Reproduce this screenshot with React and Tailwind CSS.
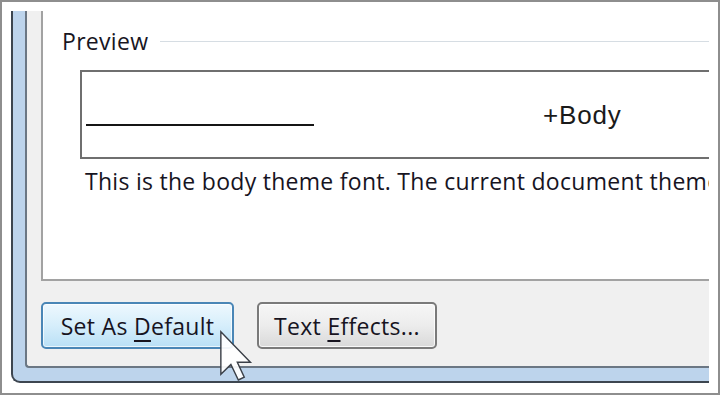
import React from "react";

const font = { fontFamily: '"Open Sans", "Noto Sans", sans-serif' };

export default function App() {
  return (
    <div
      className="relative w-[720px] h-[395px] bg-white border-2 border-[#8e8e8e] pl-[9px] pt-[9px] overflow-hidden"
      style={font}
    >
      <div className="w-[698px] h-[372px] overflow-hidden">
        <div className="w-[780px] h-full flex flex-col border-l-2 border-b-2 border-[#3d4650] rounded-bl-[9px] bg-[#bdd4ec] pl-[12px] pb-[13px]">
          <div className="flex-1 flex flex-col border-l-2 border-b-2 border-[#6b7784] rounded-bl-[4px] bg-[#f0f0f0] pl-[14px] pb-[17px]">
            <div className="flex-1 flex flex-col border-l-2 border-b-2 border-[#a2a2a2] bg-white pt-[15px] pl-[19px]">
              <div className="flex items-center h-[30px]">
                <span className="text-[23px] leading-[30px] tracking-[0.3px] text-[#18161f]">Preview</span>
                <div className="flex-1 h-px bg-[#d6dde3] ml-[12px]" />
              </div>
              <div className="ml-[18px] mt-[14px] w-[700px] h-[89px] border-2 border-[#6f6f6f] pl-[4px] pt-[31px] flex items-start">
                <div className="w-[228px] h-[2px] mt-[21px] bg-[#151515] shrink-0" />
                <span
                  className="ml-[229px] text-[26px] leading-[25px] tracking-[0.8px] text-[#1a1a1a]"
                  style={{ fontFamily: '"Liberation Sans", Arial, sans-serif' }}
                >
                  +Body
                </span>
              </div>
              <div className="ml-[23px] mt-[7px] text-[23px] leading-[30px] tracking-[0.28px] text-[#17141f] whitespace-nowrap">
                This is the body theme font. The current document theme defines which font will be used.
              </div>
            </div>
            <div className="flex gap-[23px] mt-[21px] h-[47px]">
              <div className="w-[193px] h-[47px] rounded-[5px] border-2 border-[#4a86b6] bg-gradient-to-b from-[#eef8fe] via-[#d6eefb] to-[#b9e0f6] shadow-[inset_0_0_0_1px_rgba(255,255,255,0.7)] flex items-center justify-center">
                <span className="text-[23px] leading-[30px] tracking-[0.3px] text-[#17141f]">
                  Set As{" "}
                  <span className="underline decoration-2 underline-offset-[5px]">D</span>
                  efault
                </span>
              </div>
              <div className="w-[180px] h-[47px] rounded-[5px] border-2 border-[#7a7a7a] bg-gradient-to-b from-[#f6f6f6] via-[#ececec] to-[#d9d9d9] shadow-[inset_0_0_0_1px_rgba(255,255,255,0.8)] flex items-center justify-center">
                <span className="text-[23px] leading-[30px] tracking-[0.3px] text-[#17141f]">
                  Text{" "}
                  <span className="underline decoration-2 underline-offset-[5px]">E</span>
                  ffects...
                </span>
              </div>
            </div>
          </div>
        </div>
      </div>
      <svg
        className="absolute left-[215px] top-[326px]"
        width="36"
        height="54"
        viewBox="0 0 14 21"
      >
        <path
          d="M1.5 1.5 V18 L5.4 14.2 L8.3 20.2 L10.6 19.1 L7.9 13.3 H13 Z"
          fill="#ffffff"
          fillOpacity="0.92"
          stroke="#3a3f47"
          strokeWidth="0.55"
          strokeLinejoin="miter"
        />
      </svg>
    </div>
  );
}
